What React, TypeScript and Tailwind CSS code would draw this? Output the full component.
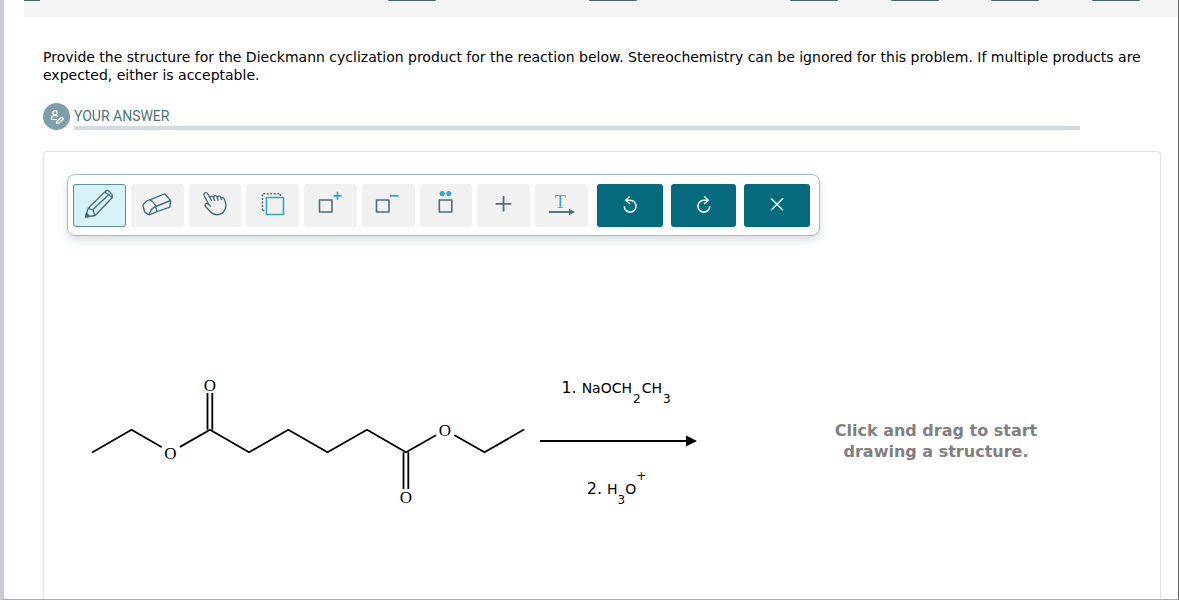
import type { ReactNode } from 'react'

interface Tool {
  label: string
  icon: ReactNode
}

const PILLS = [true, false, true, false, true, true, true, true]

const TOOLS: Tool[] = [
  {
    label: 'Draw',
    icon: (
      <>
        <path d="M1.500 28 4.200 19.300 20.500 3.200 22.300 1.600q.9-.6 1.800 0L27.600 4.900q.7.700.7 1.600l-.2 2.300L11.200 26.500z" />
        <path d="M4.200 19.300 8.800 20.800 11.200 26.500M8.800 20.800 24.800 5.500M20.500 3.200 24.800 5.500 28.100 8.800" />
        <path d="M1.500 28 2.600 24.200 5.400 27.300z" fill="#4a6f7b" />
      </>
    ),
  },
  {
    label: 'Erase',
    icon: (
      <>
        <path d="M2.700 23.200 1 16.500q1.500-4 6.700-5.700L22.700 4.800 28.700 11.500 27.900 18.200 15 22.700 7 25.800z" />
        <path d="M7.700 10.800q4.500 1.700 6 6.700L15 22.700M13.700 17.500 28.700 11.500M13.700 17.500Q9 19 7 25.800" />
      </>
    ),
  },
  {
    label: 'Select',
    icon: (
      <>
        <path d="M8.800 15.500 4.200 6.500q-.8-1.900.8-2.700 1.700-.6 2.800 1.100L11.800 12" />
        <path d="M10.300 9.200q-.3-1.500 1-2 1.400-.3 2 1.200l1.500 3.600M13.900 9q-.5-1.800 1-2.300 1.500-.3 2.100 1.300l1.100 3.500M17.700 9q-.4-1.700 1-2.100 1.500-.2 2 1.400l.9 2.700M21.300 9.200q1.500-1.400 2.700.3 3 5.800 1.200 10.200-2 5.800-8.200 6-4 0-6.500-3L5.700 17.700q-1.200-2 .1-3 1.500-.8 3.200 1l1.600 2" />
      </>
    ),
  },
  {
    label: 'Marquee',
    icon: (
      <>
        <path d="M4.500 21.500V4.800H22.500V8M4.500 21.500h3" strokeDasharray="2 1.500" strokeWidth="1.500" />
        <rect x="8.500" y="8.500" width="17" height="17" stroke="#35a7bd" strokeWidth="1.600" />
      </>
    ),
  },
  {
    label: 'Positive charge',
    icon: (
      <>
        <rect x="3.500" y="11" width="12.500" height="12" strokeWidth="1.600" />
        <path d="M21.500 2.800v8M17.500 6.800h8" stroke="#35a7bd" strokeWidth="1.800" />
      </>
    ),
  },
  {
    label: 'Negative charge',
    icon: (
      <>
        <rect x="3.500" y="11" width="12.500" height="12" strokeWidth="1.600" />
        <path d="M17 6.800h8.500" stroke="#35a7bd" strokeWidth="1.800" />
      </>
    ),
  },
  {
    label: 'Lone pair',
    icon: (
      <>
        <rect x="8.300" y="11" width="12.500" height="12" strokeWidth="1.600" />
        <circle cx="11.200" cy="4.600" r="2.600" fill="#35a7bd" stroke="none" />
        <circle cx="17.800" cy="4.600" r="2.600" fill="#35a7bd" stroke="none" />
      </>
    ),
  },
  { label: 'Add', icon: <path d="M14.500 7v15.500M6.700 14.800h15.600" strokeWidth="1.800" /> },
  {
    label: 'Reaction text',
    icon: (
      <>
        <text
          x="13.200"
          y="18.500"
          textAnchor="middle"
          className="font-['Liberation_Serif'] text-lg"
          fill="#35a7bd"
          stroke="none"
        >
          T
        </text>
        <path d="M1.800 23h21" strokeWidth="1.900" />
        <path d="M22 19.700 28 23 22 26.300z" fill="#4a6f7b" stroke="none" />
      </>
    ),
  },
]

const ACTIONS: Tool[] = [
  { label: 'Undo', icon: <path d="M3.800 4.300H8.300a5.900 5.900 0 1 1-6 5.900M7.600.5 3.800 4.300 8 8" /> },
  { label: 'Redo', icon: <path d="M12.200 4.300H7.700a5.900 5.900 0 1 0 6 5.900M8.400.5l3.800 3.800L8 8" /> },
  { label: 'Clear', icon: <path d="M2 2.200l12 12M14 2.200l-12 12" /> },
]

function TopBar() {
  return (
    <header className="ml-5 flex h-[17px] items-start bg-[#f4f4f4] pr-[38px]">
      <div className="mr-[348px] h-px w-4 bg-[#4a6468]" />
      <div className="flex flex-1 justify-between">
        {PILLS.map((shown, i) => (
          <div key={i} className={`h-px w-12 rounded-b-full ${shown ? 'bg-[#4a6468]' : ''}`} />
        ))}
      </div>
    </header>
  )
}

function Toolbar() {
  return (
    <div className="flex w-fit rounded-lg border border-[#a9bcc4] bg-white pt-[9px] pr-[9px] pb-2 pl-[5px] shadow-[0_4px_8px_rgba(70,100,120,0.22)]">
      <div className="flex w-[515px] gap-[5px]">
        {TOOLS.map((tool, i) => (
          <button
            key={tool.label}
            aria-label={tool.label}
            className={`flex h-[43px] flex-1 items-center justify-center rounded-[3px] border pb-1 ${
              i === 0 ? 'border-[#5b8d9a] bg-[#d8f3f8]' : 'border-[#f1f1f1] bg-[#f1f1f1]'
            }`}
          >
            <svg
              className="h-[30px] w-[30px]"
              viewBox="0 0 30 30"
              fill="none"
              stroke="#4a6f7b"
              strokeWidth="1.400"
              strokeLinejoin="round"
            >
              {tool.icon}
            </svg>
          </button>
        ))}
      </div>
      <div className="ml-[9px] flex w-[213px] gap-2">
        {ACTIONS.map((action) => (
          <button
            key={action.label}
            aria-label={action.label}
            className="flex h-[43px] flex-1 items-center justify-center rounded-[3px] bg-[#046a7c] pb-1"
          >
            <svg
              className="h-4 w-4 overflow-visible"
              viewBox="0 0 16 16"
              fill="none"
              stroke="#e2f0f2"
              strokeWidth="1.600"
            >
              {action.icon}
            </svg>
          </button>
        ))}
      </div>
    </div>
  )
}

// Diethyl adipate
function Molecule() {
  return (
    <svg
      className="h-[134px] w-[440px] shrink-0"
      viewBox="88 374 440 134"
      fill="none"
      stroke="#000"
      strokeWidth="1.800"
      strokeLinejoin="round"
      strokeLinecap="round"
    >
      <path d="M92.500 452.300 131.500 429.800 161 446.800" />
      <path d="M180.500 446.600 210 429.800 249 452.300 288.300 429.800 327.500 452.300 367 429.800 406 452.300 435.500 435.500" />
      <path d="M455 435.500 484.500 452.300 523.500 429.800" />
      <path d="M207.500 429.800V393M212.300 429.800V393M403.500 452.300V489M408.300 452.300V489" strokeLinecap="butt" />
      <g className="font-['Liberation_Serif'] text-[17px]" fill="#000" stroke="none" textAnchor="middle">
        <text x="210" y="391">O</text>
        <text x="170.500" y="459">O</text>
        <text x="445" y="436">O</text>
        <text x="406" y="503">O</text>
      </g>
    </svg>
  )
}

function Reagents() {
  return (
    <div className="ml-3 flex w-[157px] shrink-0 flex-col items-center pb-1 text-sm leading-8">
      <p className="pr-1">
        <span className="mr-[5px] text-base">1.</span>
        NaOCH
        <sub className="static mx-px align-[-10px] text-xs leading-none">2</sub>
        CH
        <sub className="static mx-px align-[-10px] text-xs leading-none">3</sub>
      </p>
      <svg className="mt-[30px] mb-[23px] h-3 w-full" viewBox="0 0 157 12">
        <path d="M0 6h148" stroke="#000" strokeWidth="2" />
        <path d="M146 .5 157 6 146 11.500z" />
      </svg>
      <p className="pr-1">
        <span className="mr-[5px] text-base">2.</span>
        H
        <sub className="static align-[-10px] text-xs leading-none">3</sub>
        O
        <sup className="static align-[14px] text-xs leading-none">+</sup>
      </p>
    </div>
  )
}

export default function App() {
  return (
    <div className="flex min-h-screen flex-col border-r border-b border-l-4 border-r-[#666] border-b-[#aaa] border-l-[#c3ced5] bg-white font-['DejaVu_Sans',sans-serif] text-black">
      <TopBar />
      <main className="flex flex-1 flex-col pr-[17px] pl-[39px]">
        <p className="mt-[31px] pr-4 text-sm leading-[18px]">
          Provide the structure for the Dieckmann cyclization product for the reaction below. Stereochemistry can be
          ignored for this problem. If multiple products are expected, either is acceptable.
        </p>

        <div className="mt-[19px] flex items-end gap-1 pr-[81px]">
          <div className="flex h-[27px] w-[27px] shrink-0 items-center justify-center rounded-full bg-[#7f9fa8]">
            <svg className="h-4 w-4" viewBox="0 0 16 16" fill="none" stroke="#fff" strokeWidth="1.200" strokeLinejoin="round">
              <circle cx="6" cy="3.800" r="2.200" />
              <path d="M8 10.500H2.500V8.500Q3 6.500 6 6.500q2 0 3 1.200" />
              <path d="M7.500 14.500 8 12.300 12.500 8.300l1.900 1.700-4.500 4z" />
            </svg>
          </div>
          <h2 className="flex-1 border-b-4 border-[#d3dbe0] font-['Roboto',sans-serif] text-sm text-[#4d7672]">
            YOUR ANSWER
          </h2>
        </div>

        <section className="mt-[21px] flex-1 rounded-t border border-b-0 border-[#e0e6e8] px-[23px] pt-[22px]">
          <Toolbar />
          <div className="mt-[136px] flex items-center pl-[21px]">
            <Molecule />
            <Reagents />
            <p className="flex-1 pl-[38px] text-center text-base leading-[21px] font-bold text-[#808080]">
              Click and drag to start
              <br />
              drawing a structure.
            </p>
          </div>
        </section>
      </main>
    </div>
  )
}
